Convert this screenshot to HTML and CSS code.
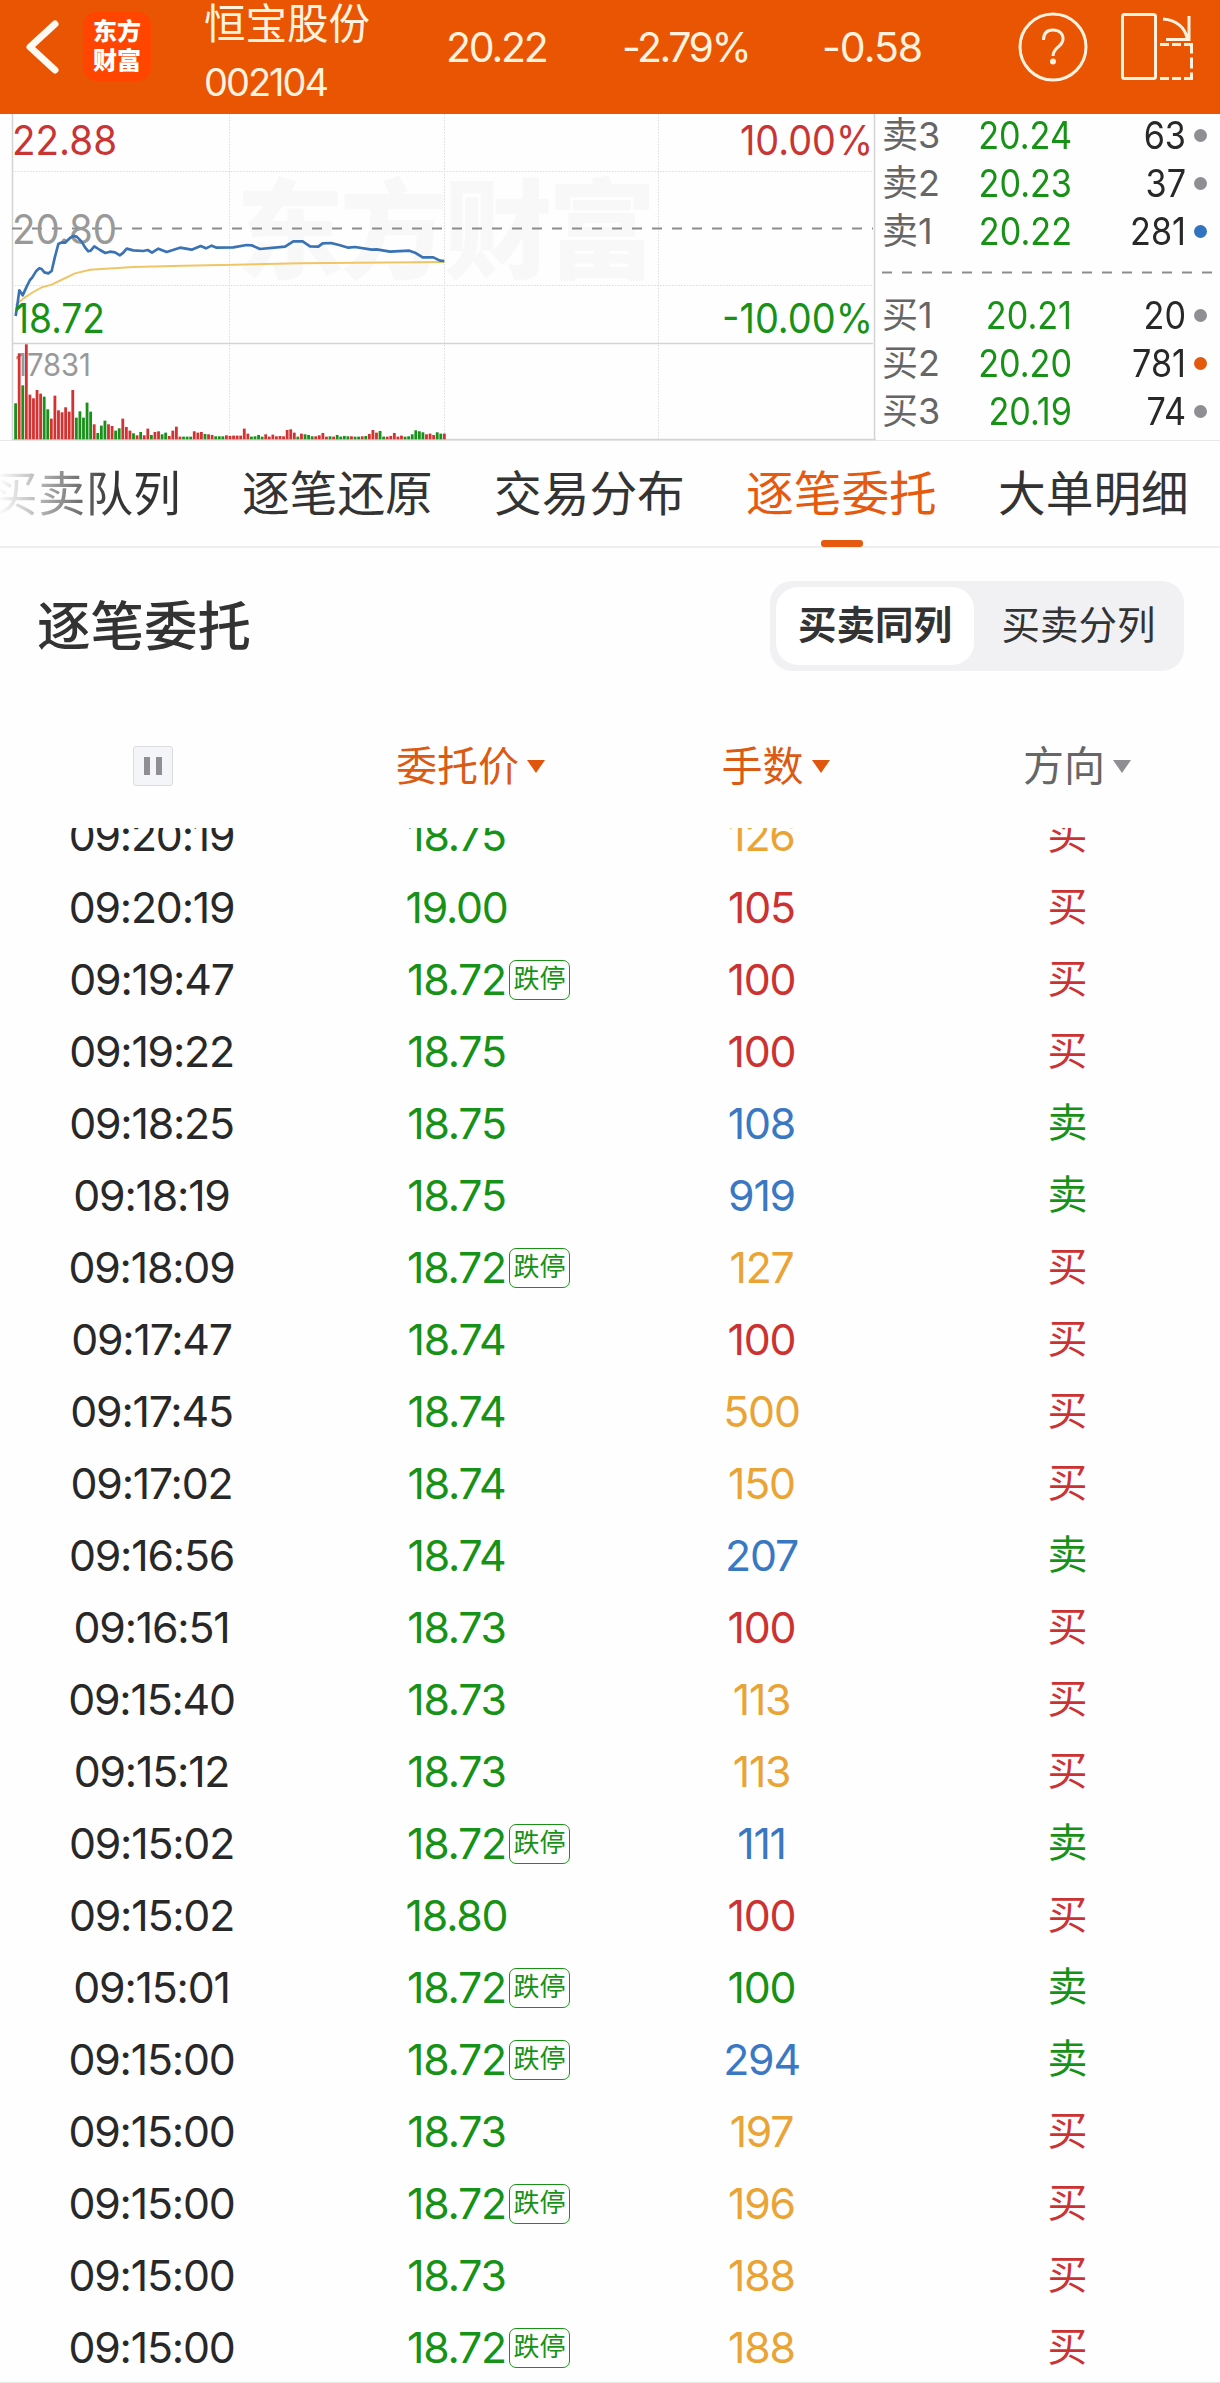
FILE: index.html
```
<!DOCTYPE html>
<html lang="zh-CN">
<head>
    <meta charset="UTF-8">
    <meta name="viewport" content="width=device-width, initial-scale=1.0">
    <title>恒宝股份 002104</title>
    <link rel="stylesheet" href="styles.css">
</head>
<body>

<header class="header">
    <svg class="back" width="36" height="58" viewBox="0 0 36 58">
        <path d="M31 6 L6 29 L31 52" />
    </svg>
    <div class="logo">东方<br>财富</div>
    <div class="stock">
        <div class="stock-name">恒宝股份</div>
        <div class="stock-code">002104</div>
    </div>
    <div class="quote">
        <span class="q-price">20.22</span>
        <span class="q-percent">-2.79%</span>
        <span class="q-change">-0.58</span>
    </div>
    <svg class="help" width="70" height="70" viewBox="0 0 70 70">
        <circle cx="35" cy="35" r="33" />
        <path d="M25.500 28 C25.500 21 29 18 35 18 C41 18 45 21.500 45 27 C45 35 35 35 35 44" />
        <circle class="dot" cx="35" cy="49.500" r="3" />
    </svg>
    <svg class="rotate" width="76" height="70" viewBox="0 0 76 70">
        <rect x="3.500" y="3.500" width="33" height="64" rx="2" />
        <path d="M44 8 C58 9 66 17 68 27 M70 5 V28.500 H47" />
        <path d="M41 33.500 h9 m3 0 h9 m3 0 h7.500 v9 m0 4 v11 m0 4 v6 h-7.500 m-3 0 h-9 m-3 0 h-9" />
    </svg>
</header>

<section class="market">
    <svg class="chart" width="876" height="327" viewBox="0 0 876 327">
        <text class="watermark" x="236" y="156" textLength="420">东方财富</text>
        <g class="grid">
            <path d="M12 57.500 H873 M12 171.500 H873 M229.500 0 V325 M444.500 0 V325 M658.500 0 V325" />
        </g>
        <path class="frame" d="M12.500 0 V326 M12 229.500 H873 M12 325.500 H876 M874.500 0 V326" />
        <path class="middle" d="M12 114.500 H873" />

        <text class="gray" x="12" y="129.500" textLength="105" lengthAdjust="spacingAndGlyphs">20.80</text>
        <g transform="translate(0 -4) scale(0.33333)">
            <polyline class="avg" points="47,585 75,562 100,546 125,532 155,524 190,507 225,490 270,479 400,471 550,467 700,464 900,460 1333,456" />
            <polyline class="price-line" points="47,618 52,585 58,541 68,556 80,530 90,510 97,502 108,484 118,475 125,477 133,487 145,490 155,483 165,440 175,402 185,397 195,398 210,384 220,378 230,380 245,395 255,412 265,424 272,422 283,409 300,420 316,429 330,425 345,427 360,436 370,428 380,416 400,421 430,423 443,420 456,428 475,416 500,426 540,413 575,419 602,408 618,415 635,407 650,413 700,412 740,405 755,406 780,417 855,410 880,394 908,394 930,409 955,410 968,400 993,399 1020,406 1045,413 1065,411 1115,419 1130,418 1170,425 1228,422 1245,428 1268,442 1300,442 1320,452 1333,453" />
        </g>
        <text class="red" x="12" y="40.500" textLength="105" lengthAdjust="spacingAndGlyphs">22.88</text>
        <text class="green" x="14" y="218.500" textLength="91" lengthAdjust="spacingAndGlyphs">18.72</text>
        <text class="red" x="740" y="40.500" textLength="133" lengthAdjust="spacingAndGlyphs">10.00%</text>
        <text class="green" x="722" y="218.500" textLength="151" lengthAdjust="spacingAndGlyphs">-10.00%</text>
        <text class="gray volume-max" x="15" y="261.500" textLength="76" lengthAdjust="spacingAndGlyphs">17831</text>
        <g id="volume"></g>
    </svg>

    <div class="book">
        <div class="level"><span>卖3</span><b>20.24</b><em>63</em><i></i></div>
        <div class="level"><span>卖2</span><b>20.23</b><em>37</em><i></i></div>
        <div class="level"><span>卖1</span><b>20.22</b><em>281</em><i class="blue-dot"></i></div>
        <svg class="divider" width="332" height="36" viewBox="0 0 332 36"><path d="M0 17.500 H332" /></svg>
        <div class="level"><span>买1</span><b>20.21</b><em>20</em><i></i></div>
        <div class="level"><span>买2</span><b>20.20</b><em>781</em><i class="orange-dot"></i></div>
        <div class="level"><span>买3</span><b>20.19</b><em>74</em><i></i></div>
    </div>
</section>

<nav class="tabs">
    <a class="faded">买卖队列</a>
    <a>逐笔还原</a>
    <a>交易分布</a>
    <a class="active">逐笔委托</a>
    <a>大单明细</a>
</nav>

<div class="title-bar">
    <h2>逐笔委托</h2>
    <div class="switch">
        <span class="on">买卖同列</span>
        <span>买卖分列</span>
    </div>
</div>

<div class="row table-head">
    <div><span class="pause"></span></div>
    <div class="sorted">委托价<span class="arrow"></span></div>
    <div class="sorted">手数<span class="arrow"></span></div>
    <div class="direction">方向<span class="arrow"></span></div>
</div>

<div class="list">
    <div class="row"><div>09:20:19</div><div class="green">18.75</div><div class="yellow">126</div><div class="red">买</div></div>
    <div class="row"><div>09:20:19</div><div class="green">19.00</div><div class="red">105</div><div class="red">买</div></div>
    <div class="row"><div>09:19:47</div><div class="green"><span class="limit">18.72<small>跌停</small></span></div><div class="red">100</div><div class="red">买</div></div>
    <div class="row"><div>09:19:22</div><div class="green">18.75</div><div class="red">100</div><div class="red">买</div></div>
    <div class="row"><div>09:18:25</div><div class="green">18.75</div><div class="blue">108</div><div class="green">卖</div></div>
    <div class="row"><div>09:18:19</div><div class="green">18.75</div><div class="blue">919</div><div class="green">卖</div></div>
    <div class="row"><div>09:18:09</div><div class="green"><span class="limit">18.72<small>跌停</small></span></div><div class="yellow">127</div><div class="red">买</div></div>
    <div class="row"><div>09:17:47</div><div class="green">18.74</div><div class="red">100</div><div class="red">买</div></div>
    <div class="row"><div>09:17:45</div><div class="green">18.74</div><div class="yellow">500</div><div class="red">买</div></div>
    <div class="row"><div>09:17:02</div><div class="green">18.74</div><div class="yellow">150</div><div class="red">买</div></div>
    <div class="row"><div>09:16:56</div><div class="green">18.74</div><div class="blue">207</div><div class="green">卖</div></div>
    <div class="row"><div>09:16:51</div><div class="green">18.73</div><div class="red">100</div><div class="red">买</div></div>
    <div class="row"><div>09:15:40</div><div class="green">18.73</div><div class="yellow">113</div><div class="red">买</div></div>
    <div class="row"><div>09:15:12</div><div class="green">18.73</div><div class="yellow">113</div><div class="red">买</div></div>
    <div class="row"><div>09:15:02</div><div class="green"><span class="limit">18.72<small>跌停</small></span></div><div class="blue">111</div><div class="green">卖</div></div>
    <div class="row"><div>09:15:02</div><div class="green">18.80</div><div class="red">100</div><div class="red">买</div></div>
    <div class="row"><div>09:15:01</div><div class="green"><span class="limit">18.72<small>跌停</small></span></div><div class="green">100</div><div class="green">卖</div></div>
    <div class="row"><div>09:15:00</div><div class="green"><span class="limit">18.72<small>跌停</small></span></div><div class="blue">294</div><div class="green">卖</div></div>
    <div class="row"><div>09:15:00</div><div class="green">18.73</div><div class="yellow">197</div><div class="red">买</div></div>
    <div class="row"><div>09:15:00</div><div class="green"><span class="limit">18.72<small>跌停</small></span></div><div class="yellow">196</div><div class="red">买</div></div>
    <div class="row"><div>09:15:00</div><div class="green">18.73</div><div class="yellow">188</div><div class="red">买</div></div>
    <div class="row"><div>09:15:00</div><div class="green"><span class="limit">18.72<small>跌停</small></span></div><div class="yellow">188</div><div class="red">买</div></div>
</div>

<script>
    // one entry per minute: direction + volume height
    const volumes = 'g108 r258 g162 r285 r134 r123 r148 r137 g128 g90 r62 r131 r87 r81 r96 r83 r148 g65 g84 g65 g110 g83 r45 g19 g41 g56 r45 r40 g26 g33 r62 r37 r26 g18 r12 g22 r12 r32 g13 r22 r24 g15 g20 r10 r26 r38 r8 g8 g8 g8 r24 r20 r22 g16 r15 r13 g9 g9 g9 r12 r10 r11 r11 r11 r32 r17 g8 g9 g13 g8 r15 r8 r14 r9 r10 r9 r28 r30 r20 g8 r17 g15 g13 g9 r9 r12 r19 r8 g9 r8 g13 g8 g10 g9 r9 g8 g8 r9 g10 r16 r28 r20 g25 g8 r8 r10 r19 r8 r11 g8 g9 g15 g27 g24 g21 r15 r17 r13 g21 g17 r17'.split(' ');
    const group = document.getElementById('volume');

    volumes.forEach(function (item, i) {
        const bar = document.createElementNS('http://www.w3.org/2000/svg', 'rect');
        const height = Number(item.slice(1)) / 3;
        bar.setAttribute('class', item[0] === 'r' ? 'up' : 'down');
        bar.setAttribute('x', 14.2 + i * 3.573);
        bar.setAttribute('y', 325.3 - height);
        bar.setAttribute('width', 2.8);
        bar.setAttribute('height', height);
        group.appendChild(bar);
    });
</script>

</body>
</html>
```
FILE: styles.css
```
* {
    box-sizing: border-box;
}

body {
    margin: 0;
    width: 1220px;
    height: 2383px;
    overflow: hidden;
    background-color: #fefefe;
    color: #282828;
    font-family: Inter, "Noto Sans CJK SC", sans-serif;
    border-bottom: 1px solid #e6e6e6;
}

.red {
    color: #cc3232;
    fill: #c93434;
}

.green {
    color: #179217;
    fill: #179217;
}

.blue {
    color: #3a78c3;
}

.yellow {
    color: #eaa436;
}

.header {
    display: flex;
    height: 114px;
    background-color: #ea5504;
    color: #fff3df;
}

.header svg {
    fill: none;
    stroke: #fff3df;
    stroke-width: 3;
    flex-shrink: 0;
}

.header .back {
    margin: 18px 0 0 24px;
    stroke: #fffaf2;
    stroke-width: 7;
    stroke-linecap: round;
    stroke-linejoin: round;
}

.logo {
    width: 68px;
    height: 69px;
    margin: 12px 0 0 23px;
    padding-top: 5px;
    border-radius: 14px;
    background-color: #ff4500;
    color: #fff;
    font-size: 24px;
    font-weight: 900;
    line-height: 29px;
    text-align: center;
}

.stock {
    width: 242px;
    margin-left: 53px;
}

.stock-name {
    font-size: 41.5px;
    line-height: 48px;
    white-space: nowrap;
}

.stock-code {
    margin-top: 10px;
    font-size: 38px;
    line-height: 48px;
    letter-spacing: -2px;
}

.quote {
    display: flex;
    width: 573px;
    font-size: 41px;
    line-height: 94px;
    letter-spacing: -2.200px;
}

.q-price {
    width: 176px;
}

.q-percent {
    width: 200px;
    letter-spacing: -2.500px;
}

.q-change {
    letter-spacing: -1px;
}

.header .help {
    margin: 12px 0 0 -1px;
}

.help .dot {
    fill: #fff3df;
    stroke: none;
}

.header .rotate {
    margin: 11px 0 0 31px;
}

.market {
    display: flex;
    height: 327px;
    border-bottom: 1px solid #e8e8e8;
}

.chart {
    flex-shrink: 0;
    font-size: 41px;
}

.chart .watermark {
    font-size: 108px;
    font-weight: 900;
    fill: #f8f8f8;
}

.grid {
    fill: none;
    stroke: #dcdcdc;
    stroke-dasharray: 1.500 1.500;
}

.frame {
    fill: none;
    stroke: #d4d4d4;
    stroke-width: 1.500;
}

.middle,
.divider {
    fill: none;
    stroke: #8c8c8c;
    stroke-width: 2;
    stroke-dasharray: 10 10;
}

.gray {
    fill: #999;
}

.chart .volume-max {
    font-size: 31px;
}

.avg {
    fill: none;
    stroke: #f0c566;
    stroke-width: 6;
}

.price-line {
    fill: none;
    stroke: #3973b4;
    stroke-width: 8;
    stroke-linejoin: round;
}

.up {
    fill: #d23232;
}

.down {
    fill: #1a8f1a;
}

.book {
    padding: 0 0 0 6px;
    width: 344px;
    margin-top: -3px;
}

.level {
    display: flex;
    align-items: center;
    height: 48px;
    font-size: 38px;
    line-height: 48px;
}

.level span {
    width: 70px;
    color: #666;
    font-size: 36px;
}

.level b,
.level em {
    font-weight: 400;
    font-style: normal;
    text-align: right;
    transform: scaleX(0.9);
    transform-origin: right;
}

.level b {
    width: 120px;
    color: #179217;
}

.level em {
    width: 114px;
}

.level i {
    width: 13px;
    height: 13px;
    margin-left: 8px;
    border-radius: 50%;
    background-color: #8e8e93;
}

.level .blue-dot {
    background-color: #3273c0;
}

.level .orange-dot {
    background-color: #e35a0c;
}

.divider {
    display: block;
}

.tabs {
    display: flex;
    gap: 60px;
    height: 107px;
    margin-left: -10px;
    border-bottom: 2px solid #eee;
    font-size: 47.700px;
    line-height: 106px;
    white-space: nowrap;
    color: #333;
}

.tabs a {
    flex: 0 0 192px;
}

.tabs .faded {
    background: linear-gradient(to right, #fefefe 8px, #333 125px);
    background-clip: text;
    -webkit-background-clip: text;
    color: transparent;
}

.tabs .active {
    position: relative;
    color: #e65a10;
}

.active::after {
    content: "";
    position: absolute;
    left: 75px;
    bottom: -1px;
    width: 42px;
    height: 7px;
    border-radius: 3px;
    background-color: #e65a10;
}

.title-bar {
    display: flex;
    justify-content: space-between;
    align-items: center;
    height: 156px;
    padding: 0 36px;
    color: #333;
}

.title-bar h2 {
    margin: 0 0 8px 1px;
    font-size: 53.500px;
    font-weight: 500;
}

.switch {
    display: flex;
    width: 414px;
    height: 90px;
    padding: 6px;
    border-radius: 22px;
    background-color: #f1f1f4;
    font-size: 38.500px;
    line-height: 77px;
    text-align: center;
}

.switch span {
    flex: 1;
    padding-left: 5px;
}

.switch .on {
    flex: 0 0 198px;
    padding: 0;
    border-radius: 22px;
    background-color: #fff;
    font-weight: 700;
}

.row {
    display: grid;
    grid-template-columns: repeat(4, 1fr);
    height: 72px;
    font-size: 42.800px;
    line-height: 71px;
    letter-spacing: -1.200px;
    text-align: center;
}

.list .row > div {
    padding-right: 2px;
}

.list .row > :last-child {
    padding-right: 0;
    font-size: 40px;
    line-height: 69px;
    letter-spacing: 0;
}

.table-head {
    height: 124px;
    letter-spacing: 0;
    color: #666;
}

.table-head > div {
    display: flex;
    justify-content: center;
    align-items: center;
    font-size: 41px;
}

.table-head .sorted {
    padding-left: 26px;
    color: #db5a14;
}

.table-head .direction {
    padding-left: 19px;
}

.arrow {
    margin-left: 8px;
    border: 9px solid transparent;
    border-top: 13px solid #8e8e93;
    border-bottom: 0;
}

.sorted .arrow {
    border-top-color: #e0560c;
}

.pause {
    display: flex;
    width: 40px;
    height: 40px;
    padding: 10px;
    justify-content: space-between;
    border: 1px solid #dcdce0;
    border-radius: 3px;
    background-color: #f4f5f8;
}

.pause::before,
.pause::after {
    content: "";
    width: 6px;
    background-color: #8e8e93;
}

.list {
    height: 1555px;
    overflow: hidden;
}

.list .row:first-child {
    margin-top: -28px;
}

.limit {
    position: relative;
}

.limit small {
    position: absolute;
    left: 100%;
    top: 6px;
    width: 61px;
    height: 40px;
    margin-left: 3px;
    border: 1.500px solid #179217;
    border-radius: 7px;
    font-size: 26px;
    line-height: 36px;
    letter-spacing: 0;
}
```
